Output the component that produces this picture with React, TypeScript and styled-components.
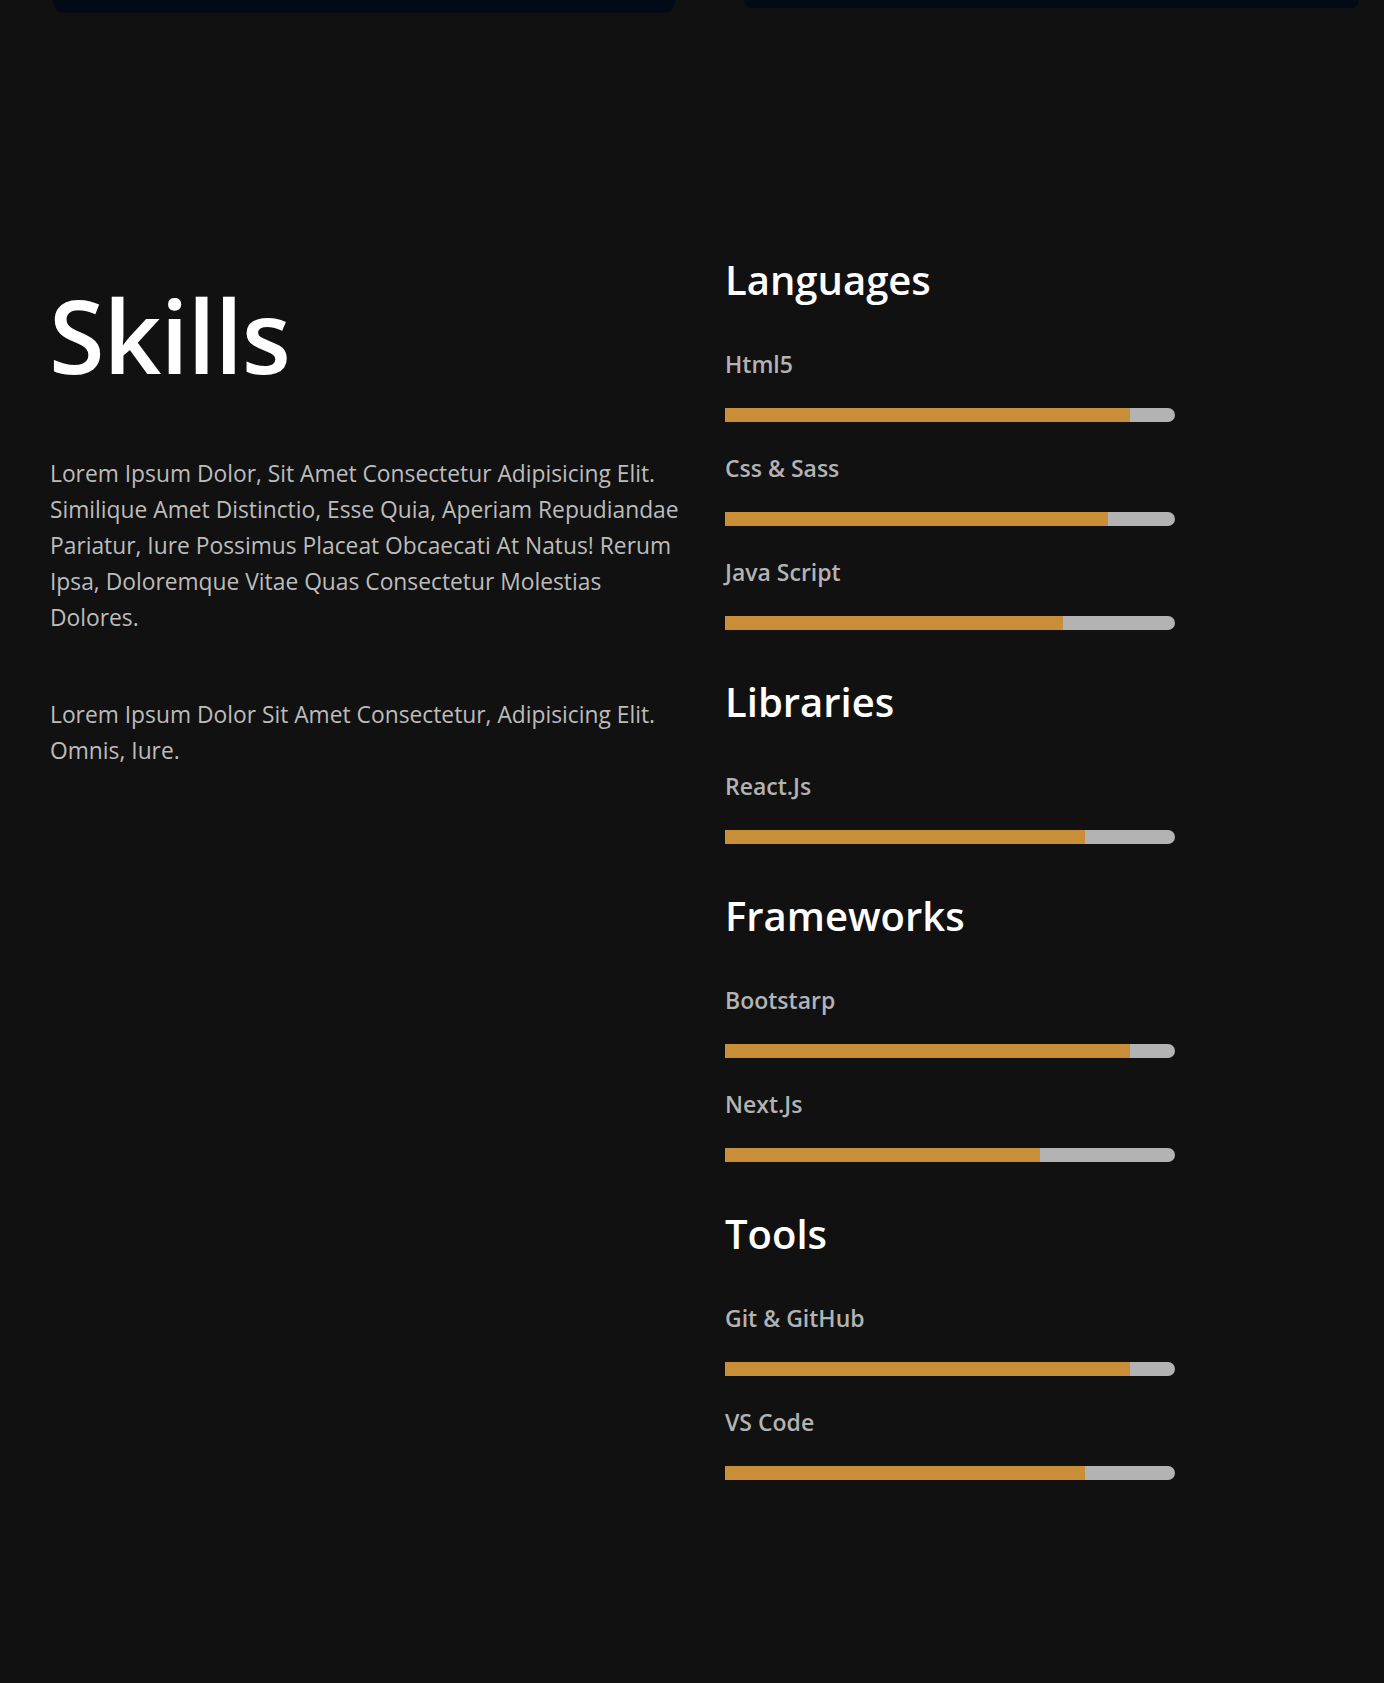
import React from "react";
import styled, { createGlobalStyle } from "styled-components";

const GlobalStyle = createGlobalStyle`
  html, body {
    margin: 0;
    padding: 0;
    background: #111111;
  }
  body {
    font-family: "Open Sans", "Noto Sans", sans-serif;
    color: #ffffff;
  }
  * { box-sizing: border-box; }
`;

const Page = styled.div`
  width: 1384px;
  min-height: 1683px;
  background: #111111;
`;

const TopCards = styled.div`
  display: flex;
  align-items: flex-start;
  gap: 69px;
  padding: 0 25px 0 53px;
`;

const PrevCard = styled.div<{ $h: number; $w: number }>`
  width: ${(p) => p.$w}px;
  height: ${(p) => p.$h}px;
  background: #020a16;
  border-radius: 0 0 12px 12px;
`;

const SkillsSection = styled.section`
  display: grid;
  grid-template-columns: 630px 449px;
  column-gap: 45px;
  align-items: start;
  padding: 0 50px;
  margin-top: 247px;
`;

const LeftCol = styled.div`
  padding-top: 25px;
`;

const Title = styled.h1`
  margin: 0 0 0 -1px;
  font-size: 101px;
  line-height: 1;
  font-weight: 600;
  color: #ffffff;
  letter-spacing: -1px;
`;

const Paragraph = styled.p<{ $gap: number }>`
  margin: ${(p) => p.$gap}px 0 0;
  font-size: 22.8px;
  line-height: 36px;
  font-weight: 400;
  color: #bcbcbc;
`;

const RightCol = styled.div`
  display: flex;
  flex-direction: column;
  gap: 52px;
`;

const Group = styled.div`
  display: flex;
  flex-direction: column;
`;

const GroupTitle = styled.h2`
  margin: 0 0 53px;
  font-size: 40px;
  line-height: 1;
  font-weight: 600;
  color: #ffffff;
`;

const Items = styled.div`
  display: flex;
  flex-direction: column;
  gap: 35px;
`;

const Item = styled.div`
  display: flex;
  flex-direction: column;
  gap: 32px;
`;

const Label = styled.div`
  font-size: 23px;
  line-height: 1;
  font-weight: 600;
  color: #b3b3b3;
`;

const Track = styled.div`
  width: 450px;
  height: 14px;
  background: #b3b3b3;
  border-radius: 0 8px 8px 0;
  overflow: hidden;
`;

const Fill = styled.div`
  height: 100%;
  background: #c88f38;
`;

type Skill = { name: string; level: number };
type SkillGroup = { title: string; skills: Skill[] };

const groups: SkillGroup[] = [
  {
    title: "Languages",
    skills: [
      { name: "Html5", level: 90 },
      { name: "Css & Sass", level: 85 },
      { name: "Java Script", level: 75 },
    ],
  },
  { title: "Libraries", skills: [{ name: "React.Js", level: 80 }] },
  {
    title: "Frameworks",
    skills: [
      { name: "Bootstarp", level: 90 },
      { name: "Next.Js", level: 70 },
    ],
  },
  {
    title: "Tools",
    skills: [
      { name: "Git & GitHub", level: 90 },
      { name: "VS Code", level: 80 },
    ],
  },
];

export default function App() {
  return (
    <Page>
      <GlobalStyle />
      <TopCards>
        <PrevCard $w={622} $h={13} />
        <PrevCard $w={615} $h={8} />
      </TopCards>
      <SkillsSection>
        <LeftCol>
          <Title>Skills</Title>
          <Paragraph $gap={70}>
            Lorem Ipsum Dolor, Sit Amet Consectetur Adipisicing Elit. Similique
            Amet Distinctio, Esse Quia, Aperiam Repudiandae Pariatur, Iure
            Possimus Placeat Obcaecati At Natus! Rerum Ipsa, Doloremque Vitae
            Quas Consectetur Molestias Dolores.
          </Paragraph>
          <Paragraph $gap={61}>
            Lorem Ipsum Dolor Sit Amet Consectetur, Adipisicing Elit. Omnis,
            Iure.
          </Paragraph>
        </LeftCol>
        <RightCol>
          {groups.map((g) => (
            <Group key={g.title}>
              <GroupTitle>{g.title}</GroupTitle>
              <Items>
                {g.skills.map((s) => (
                  <Item key={s.name}>
                    <Label>{s.name}</Label>
                    <Track>
                      <Fill style={{ width: `${s.level}%` }} />
                    </Track>
                  </Item>
                ))}
              </Items>
            </Group>
          ))}
        </RightCol>
      </SkillsSection>
    </Page>
  );
}
